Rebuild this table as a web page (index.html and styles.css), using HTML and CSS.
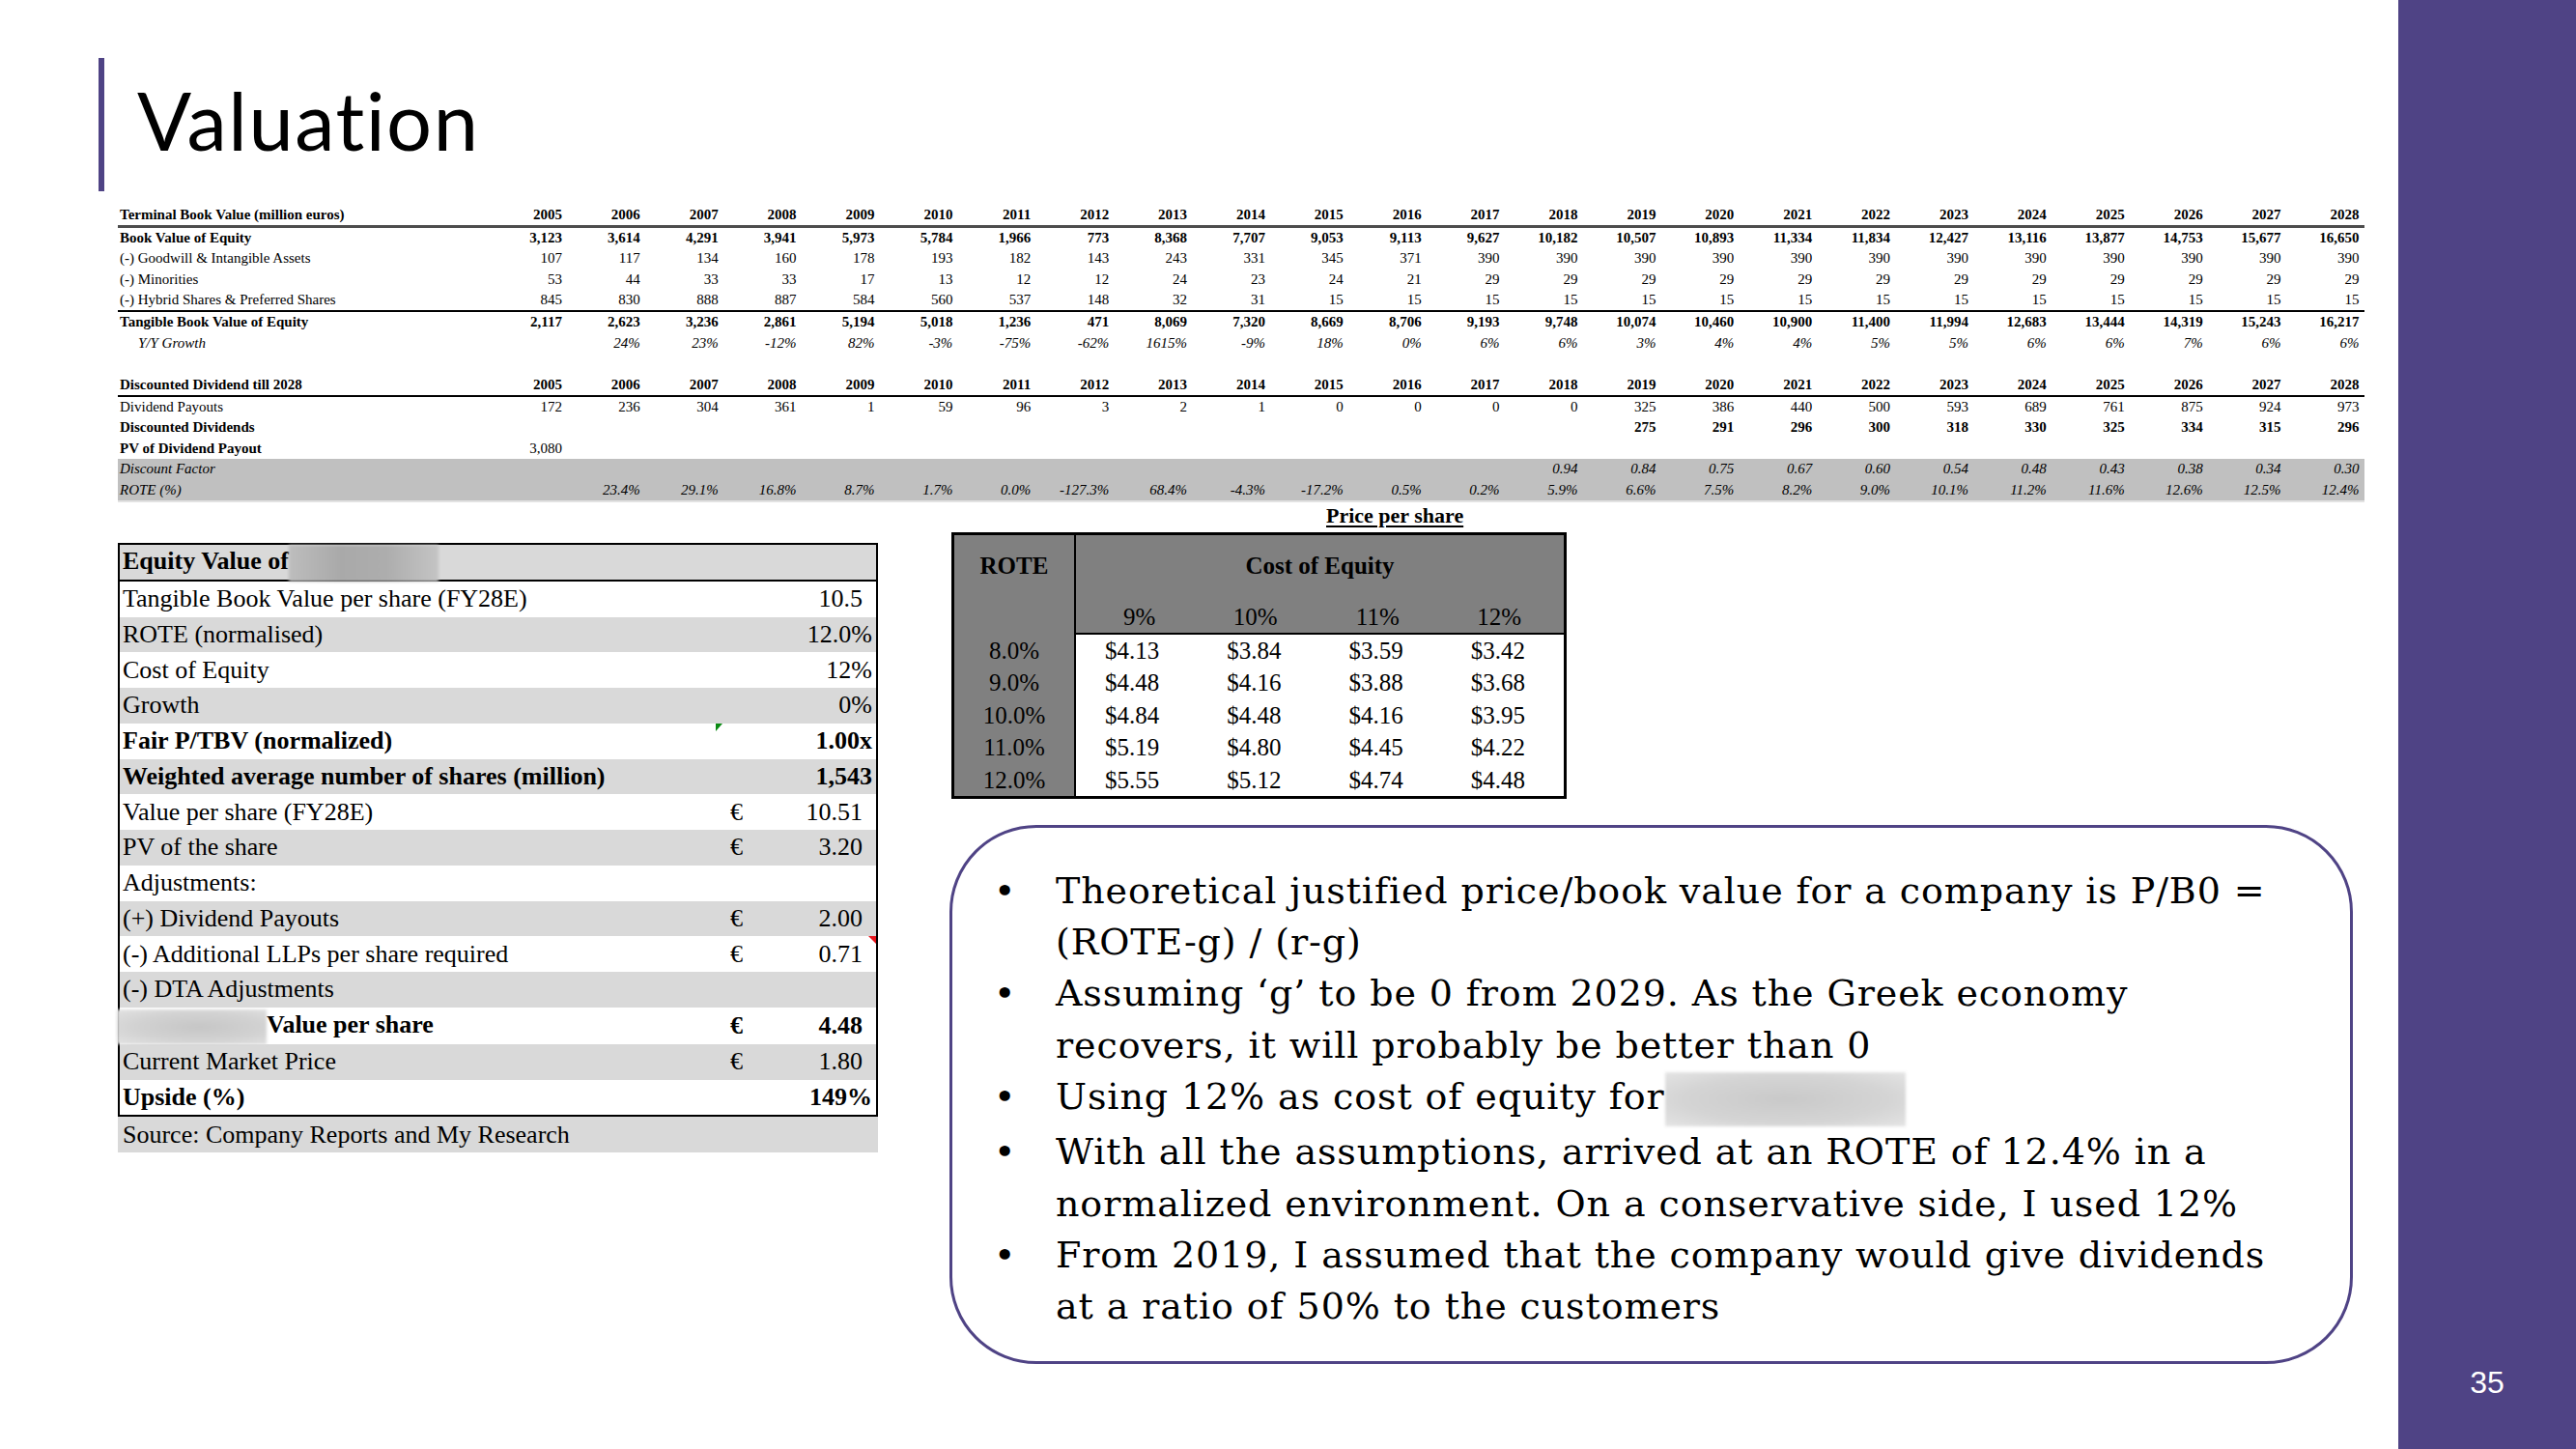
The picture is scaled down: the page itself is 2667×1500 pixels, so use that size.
FILE: index.html
```html
<!DOCTYPE html>
<html lang="en">
<head>
<meta charset="utf-8">
<title>Valuation</title>
<link rel="stylesheet" href="styles.css">
</head>
<body>
<div class="slide">
  <main class="content">
    <header class="title-bar"><h1 class="title">Valuation</h1></header>

    <table class="tbv">
      <colgroup><col class="c-label"><col span="24" class="c-year"></colgroup>
      <tr class="hd"><th>Terminal Book Value (million euros)</th><th>2005</th><th>2006</th><th>2007</th><th>2008</th><th>2009</th><th>2010</th><th>2011</th><th>2012</th><th>2013</th><th>2014</th><th>2015</th><th>2016</th><th>2017</th><th>2018</th><th>2019</th><th>2020</th><th>2021</th><th>2022</th><th>2023</th><th>2024</th><th>2025</th><th>2026</th><th>2027</th><th>2028</th></tr>
      <tr class="bold"><td>Book Value of Equity</td><td>3,123</td><td>3,614</td><td>4,291</td><td>3,941</td><td>5,973</td><td>5,784</td><td>1,966</td><td>773</td><td>8,368</td><td>7,707</td><td>9,053</td><td>9,113</td><td>9,627</td><td>10,182</td><td>10,507</td><td>10,893</td><td>11,334</td><td>11,834</td><td>12,427</td><td>13,116</td><td>13,877</td><td>14,753</td><td>15,677</td><td>16,650</td></tr>
      <tr><td>(-) Goodwill &amp; Intangible Assets</td><td>107</td><td>117</td><td>134</td><td>160</td><td>178</td><td>193</td><td>182</td><td>143</td><td>243</td><td>331</td><td>345</td><td>371</td><td>390</td><td>390</td><td>390</td><td>390</td><td>390</td><td>390</td><td>390</td><td>390</td><td>390</td><td>390</td><td>390</td><td>390</td></tr>
      <tr><td>(-) Minorities</td><td>53</td><td>44</td><td>33</td><td>33</td><td>17</td><td>13</td><td>12</td><td>12</td><td>24</td><td>23</td><td>24</td><td>21</td><td>29</td><td>29</td><td>29</td><td>29</td><td>29</td><td>29</td><td>29</td><td>29</td><td>29</td><td>29</td><td>29</td><td>29</td></tr>
      <tr class="rule"><td>(-) Hybrid Shares &amp; Preferred Shares</td><td>845</td><td>830</td><td>888</td><td>887</td><td>584</td><td>560</td><td>537</td><td>148</td><td>32</td><td>31</td><td>15</td><td>15</td><td>15</td><td>15</td><td>15</td><td>15</td><td>15</td><td>15</td><td>15</td><td>15</td><td>15</td><td>15</td><td>15</td><td>15</td></tr>
      <tr class="bold"><td>Tangible Book Value of Equity</td><td>2,117</td><td>2,623</td><td>3,236</td><td>2,861</td><td>5,194</td><td>5,018</td><td>1,236</td><td>471</td><td>8,069</td><td>7,320</td><td>8,669</td><td>8,706</td><td>9,193</td><td>9,748</td><td>10,074</td><td>10,460</td><td>10,900</td><td>11,400</td><td>11,994</td><td>12,683</td><td>13,444</td><td>14,319</td><td>15,243</td><td>16,217</td></tr>
      <tr class="it"><td class="indent">Y/Y Growth</td><td></td><td>24%</td><td>23%</td><td>-12%</td><td>82%</td><td>-3%</td><td>-75%</td><td>-62%</td><td>1615%</td><td>-9%</td><td>18%</td><td>0%</td><td>6%</td><td>6%</td><td>3%</td><td>4%</td><td>4%</td><td>5%</td><td>5%</td><td>6%</td><td>6%</td><td>7%</td><td>6%</td><td>6%</td></tr>
      <tr class="gap"><td colspan="25">&nbsp;</td></tr>
      <tr class="hd2"><th>Discounted Dividend till 2028</th><th>2005</th><th>2006</th><th>2007</th><th>2008</th><th>2009</th><th>2010</th><th>2011</th><th>2012</th><th>2013</th><th>2014</th><th>2015</th><th>2016</th><th>2017</th><th>2018</th><th>2019</th><th>2020</th><th>2021</th><th>2022</th><th>2023</th><th>2024</th><th>2025</th><th>2026</th><th>2027</th><th>2028</th></tr>
      <tr><td>Dividend Payouts</td><td>172</td><td>236</td><td>304</td><td>361</td><td>1</td><td>59</td><td>96</td><td>3</td><td>2</td><td>1</td><td>0</td><td>0</td><td>0</td><td>0</td><td>325</td><td>386</td><td>440</td><td>500</td><td>593</td><td>689</td><td>761</td><td>875</td><td>924</td><td>973</td></tr>
      <tr class="bold"><td>Discounted Dividends</td><td></td><td></td><td></td><td></td><td></td><td></td><td></td><td></td><td></td><td></td><td></td><td></td><td></td><td></td><td>275</td><td>291</td><td>296</td><td>300</td><td>318</td><td>330</td><td>325</td><td>334</td><td>315</td><td>296</td></tr>
      <tr><td class="bold">PV of Dividend Payout</td><td>3,080</td><td></td><td></td><td></td><td></td><td></td><td></td><td></td><td></td><td></td><td></td><td></td><td></td><td></td><td></td><td></td><td></td><td></td><td></td><td></td><td></td><td></td><td></td><td></td></tr>
      <tr class="shade it"><td>Discount Factor</td><td></td><td></td><td></td><td></td><td></td><td></td><td></td><td></td><td></td><td></td><td></td><td></td><td></td><td>0.94</td><td>0.84</td><td>0.75</td><td>0.67</td><td>0.60</td><td>0.54</td><td>0.48</td><td>0.43</td><td>0.38</td><td>0.34</td><td>0.30</td></tr>
      <tr class="shade it last"><td>ROTE (%)</td><td></td><td>23.4%</td><td>29.1%</td><td>16.8%</td><td>8.7%</td><td>1.7%</td><td>0.0%</td><td>-127.3%</td><td>68.4%</td><td>-4.3%</td><td>-17.2%</td><td>0.5%</td><td>0.2%</td><td>5.9%</td><td>6.6%</td><td>7.5%</td><td>8.2%</td><td>9.0%</td><td>10.1%</td><td>11.2%</td><td>11.6%</td><td>12.6%</td><td>12.5%</td><td>12.4%</td></tr>
    </table>

    <section class="lower">
      <div class="equity-col">
        <table class="equity">
          <colgroup><col class="e-label"><col class="e-cur"><col class="e-val"></colgroup>
          <thead>
            <tr><th colspan="3">Equity Value of<span class="redact redact-head"></span></th></tr>
          </thead>
          <tbody>
            <tr><td class="lbl">Tangible Book Value per share (FY28E)</td><td class="cur"></td><td class="val">10.5</td></tr>
            <tr class="alt"><td class="lbl">ROTE (normalised)</td><td class="cur"></td><td class="val pct">12.0%</td></tr>
            <tr><td class="lbl">Cost of Equity</td><td class="cur"></td><td class="val pct">12%</td></tr>
            <tr class="alt"><td class="lbl">Growth</td><td class="cur"></td><td class="val pct">0%</td></tr>
            <tr class="strong"><td class="lbl">Fair P/TBV (normalized)</td><td class="cur flag-green"></td><td class="val pct">1.00x</td></tr>
            <tr class="alt strong"><td class="lbl">Weighted average number of shares (million)</td><td class="cur"></td><td class="val pct">1,543</td></tr>
            <tr><td class="lbl">Value per share (FY28E)</td><td class="cur">€</td><td class="val">10.51</td></tr>
            <tr class="alt"><td class="lbl">PV of the share</td><td class="cur">€</td><td class="val">3.20</td></tr>
            <tr><td class="lbl">Adjustments:</td><td class="cur"></td><td class="val"></td></tr>
            <tr class="alt"><td class="lbl">(+) Dividend Payouts</td><td class="cur">€</td><td class="val">2.00</td></tr>
            <tr><td class="lbl">(-) Additional LLPs per share required</td><td class="cur">€</td><td class="val flag-red">0.71</td></tr>
            <tr class="alt"><td class="lbl">(-) DTA Adjustments</td><td class="cur"></td><td class="val"></td></tr>
            <tr class="strong"><td class="lbl"><span class="redact redact-row"></span>Value per share</td><td class="cur">€</td><td class="val">4.48</td></tr>
            <tr class="alt"><td class="lbl">Current Market Price</td><td class="cur">€</td><td class="val">1.80</td></tr>
            <tr class="strong"><td class="lbl">Upside (%)</td><td class="cur"></td><td class="val pct">149%</td></tr>
          </tbody>
        </table>
        <div class="source">Source: Company Reports and My Research</div>
      </div>

      <div class="right-col">
        <div class="pps-title">Price per share</div>
        <table class="pps">
          <colgroup><col class="p-rote"><col span="4" class="p-val"></colgroup>
          <tr class="p-head"><th class="rote">ROTE</th><th colspan="4" class="coe">Cost of Equity</th></tr>
          <tr class="p-pcts"><td class="rote"></td><td class="pc">9%</td><td class="pc">10%</td><td class="pc">11%</td><td class="pc">12%</td></tr>
          <tr><td class="rote">8.0%</td><td>$4.13</td><td>$3.84</td><td>$3.59</td><td>$3.42</td></tr>
          <tr><td class="rote">9.0%</td><td>$4.48</td><td>$4.16</td><td>$3.88</td><td>$3.68</td></tr>
          <tr><td class="rote">10.0%</td><td>$4.84</td><td>$4.48</td><td>$4.16</td><td>$3.95</td></tr>
          <tr><td class="rote">11.0%</td><td>$5.19</td><td>$4.80</td><td>$4.45</td><td>$4.22</td></tr>
          <tr><td class="rote">12.0%</td><td>$5.55</td><td>$5.12</td><td>$4.74</td><td>$4.48</td></tr>
        </table>

        <div class="notes">
          <ul>
            <li><span class="dot">•</span><span class="txt">Theoretical justified price/book value for a company is P/B0 =<br>(ROTE-g) / (r-g)</span></li>
            <li><span class="dot">•</span><span class="txt">Assuming ‘g’ to be 0 from 2029. As the Greek economy<br>recovers, it will probably be better than 0</span></li>
            <li><span class="dot">•</span><span class="txt">Using 12% as cost of equity for<span class="redact redact-note"></span></span></li>
            <li><span class="dot">•</span><span class="txt">With all the assumptions, arrived at an ROTE of 12.4% in a<br>normalized environment. On a conservative side, I used 12%</span></li>
            <li><span class="dot">•</span><span class="txt">From 2019, I assumed that the company would give dividends<br>at a ratio of 50% to the customers</span></li>
          </ul>
        </div>
      </div>
    </section>
  </main>
  <aside class="sidebar"><span class="page-num">35</span></aside>
</div>
</body>
</html>
```

FILE: styles.css
```css
* { box-sizing: border-box; }
html, body { margin: 0; padding: 0; }
body {
  width: 2667px;
  height: 1500px;
  overflow: hidden;
  background: #ffffff;
  color: #000;
  font-family: "Liberation Serif", "Times New Roman", serif;
}

.slide { display: flex; width: 2667px; height: 1500px; }
.content { flex: 0 0 2483px; min-width: 0; }

.sidebar {
  flex: 0 0 184px;
  background: #4f4385;
  display: flex;
  align-items: flex-end;
  justify-content: center;
  padding-bottom: 53px;
}
.page-num {
  font-family: "Liberation Sans", Arial, sans-serif;
  font-size: 32px;
  line-height: 32px;
  color: #fff;
}

/* Title */
.title-bar {
  margin: 60px 0 0 102px;
  height: 138px;
  border-left: 6px solid #4f4385;
  display: flex;
  align-items: center;
  padding: 0 0 10px 34px;
}
.title {
  margin: 0;
  font-family: Lato, "Open Sans", sans-serif;
  font-weight: 400;
  font-size: 83px;
  letter-spacing: 1.5px;
  line-height: 1;
}

/* Terminal book value table */
.tbv {
  margin: 14px 0 0 122px;
  width: 2325.6px;
  table-layout: fixed;
  border-collapse: collapse;
  font-size: 15px;
}
.tbv col.c-label { width: 384px; }
.tbv col.c-year { width: 80.9px; }
.tbv th, .tbv td {
  height: 21.7px;
  padding: 0 5px 0 0;
  line-height: 21px;
  text-align: right;
  white-space: nowrap;
  font-weight: 400;
}
.tbv th { font-weight: 700; }
.tbv th:first-child, .tbv td:first-child { text-align: left; padding-left: 2px; }
.tbv td.indent { padding-left: 21px; }
.tbv tr.hd th { border-bottom: 3px solid #4d4d4d; }
.tbv tr.hd2 th { border-bottom: 2px solid #000; }
.tbv tr.rule td { border-bottom: 2px solid #000; }
.tbv tr.bold td, .tbv td.bold { font-weight: 700; }
.tbv tr.it td { font-style: italic; }
.tbv tr.shade td { background: #c0c0c0; }
.tbv tr.last td { border-bottom: 2px solid #e2e2e2; }

/* Lower section */
.lower {
  display: flex;
  align-items: flex-start;
  margin: 3px 0 0 122px;
}

.equity-col { width: 787px; margin-top: 39px; flex: 0 0 auto; }
.equity {
  width: 787px;
  table-layout: fixed;
  border-collapse: separate;
  border-spacing: 0;
  border: 2px solid #000;
  font-size: 26px;
}
.equity col.e-label { width: 615px; }
.equity col.e-cur { width: 60px; }
.equity col.e-val { width: 108px; }
.equity th, .equity td {
  height: 36.75px;
  padding: 0;
  line-height: 36px;
  white-space: nowrap;
  font-weight: 400;
  text-align: left;
}
.equity thead th {
  height: 34px;
  line-height: 34px;
  background: #d9d9d9;
  border-bottom: 2px solid #000;
  font-weight: 700;
  padding-left: 3px;
}
.equity td.lbl { padding-left: 3px; }
.equity td.cur { padding-left: 17px; position: relative; }
.equity td.val { text-align: right; padding-right: 14px; position: relative; }
.equity td.val.pct { padding-right: 4px; }
.equity tr.alt td { background: #d9d9d9; }
.equity tr.strong td { font-weight: 700; }

.flag-green::before {
  content: "";
  position: absolute;
  left: 2px;
  top: 0;
  border-top: 8px solid #0a8a12;
  border-right: 7px solid transparent;
}
.flag-red::after {
  content: "";
  position: absolute;
  right: 0;
  top: 0;
  border-top: 8px solid #e8141c;
  border-left: 8px solid transparent;
}

.redact { display: inline-block; vertical-align: middle; }
.redact-head {
  width: 155px;
  height: 38px;
  margin: -2px 0;
  background: linear-gradient(90deg, #bdbdbd 0%, #a9a9a9 35%, #adadad 65%, #c4c4c4 100%);
  filter: blur(1.5px);
}
.redact-row {
  width: 155px;
  height: 36px;
  margin-left: -6px;
  background: radial-gradient(ellipse at 55% 50%, #c6c6c6 0%, #d2d2d2 55%, #e2e2e2 100%);
  filter: blur(1.5px);
}

.source {
  background: #d9d9d9;
  height: 37px;
  line-height: 37px;
  font-size: 26px;
  padding-left: 5px;
}

/* Right column */
.right-col {
  flex: 0 0 1453px;
  margin-left: 76px;
  display: flex;
  flex-direction: column;
  align-items: flex-start;
}
.pps-title {
  margin-left: 388px;
  font-size: 22px;
  line-height: 22px;
  font-weight: 700;
  text-decoration: underline;
  text-decoration-thickness: 2px;
  text-underline-offset: 3px;
}
.pps {
  margin: 6px 0 0 0;
  width: 637px;
  table-layout: fixed;
  border-collapse: separate;
  border-spacing: 0;
  border: 3px solid #000;
  font-size: 25px;
}
.pps col.p-rote { width: 126px; }
.pps col.p-val { width: 126.25px; }
.pps th, .pps td {
  padding: 0 40px 0 0;
  height: 33.4px;
  line-height: 33px;
  text-align: right;
  white-space: nowrap;
  font-weight: 400;
}
.pps .rote {
  background: #808080;
  border-right: 2px solid #000;
  text-align: center;
  padding: 0;
}
.pps tr.p-head th { height: 64px; font-weight: 700; vertical-align: middle; }
.pps th.coe { background: #808080; text-align: center; padding: 0; }
.pps tr.p-pcts td { height: 39px; vertical-align: bottom; line-height: 33px; }
.pps td.pc { background: #808080; border-bottom: 2px solid #000; padding-right: 44px; }

/* Notes box */
.notes {
  margin: 27px 0 0 -2px;
  width: 1453px;
  height: 558px;
  border: 3px solid #4f4385;
  border-radius: 90px;
  padding: 39px 0 0 43px;
}
.notes ul {
  list-style: none;
  margin: 0;
  padding: 0;
  font-family: "DejaVu Serif", serif;
  font-size: 38px;
  letter-spacing: 0.9px;
  line-height: 53.3px;
}
.notes li { display: grid; grid-template-columns: 64px auto; white-space: nowrap; }
.redact-note {
  width: 249px;
  height: 56px;
  background: radial-gradient(ellipse at 50% 50%, #c9c9c9 0%, #d4d4d4 60%, #e4e4e4 100%);
  filter: blur(1.5px);
}
```
